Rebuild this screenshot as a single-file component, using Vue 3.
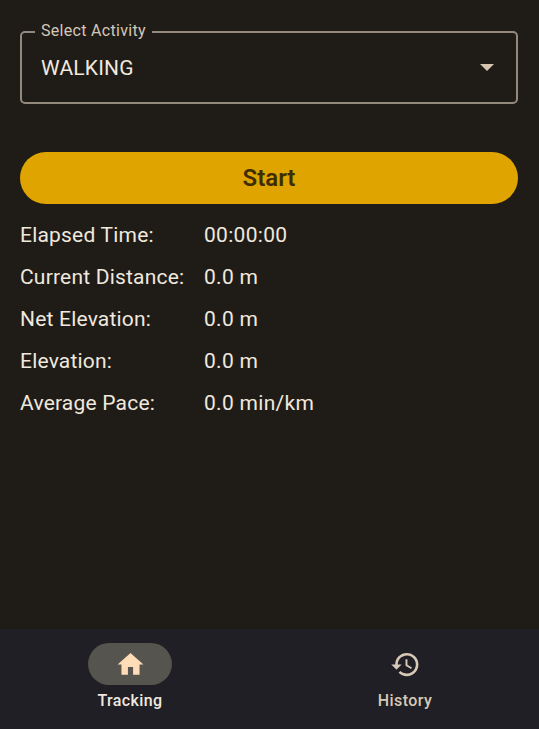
<script setup>
const stats = [
  { label: 'Elapsed Time:', value: '00:00:00' },
  { label: 'Current Distance:', value: '0.0 m' },
  { label: 'Net Elevation:', value: '0.0 m' },
  { label: 'Elevation:', value: '0.0 m' },
  { label: 'Average Pace:', value: '0.0 min/km' },
]
</script>

<template>
  <div class="screen">
    <main class="content">
      <div class="select">
        <span class="legend">Select Activity</span>
        <span class="select-value">WALKING</span>
        <svg class="caret" width="14" height="7" viewBox="0 0 14 7"><path d="M0 0h14L7 7z" fill="#d5c4ae" /></svg>
      </div>
      <button class="start">Start</button>
      <div class="stats">
        <div v-for="s in stats" :key="s.label" class="stat">
          <span class="stat-label">{{ s.label }}</span>
          <span class="stat-value">{{ s.value }}</span>
        </div>
      </div>
    </main>
    <nav class="nav">
      <div class="nav-item active">
        <div class="pill">
          <svg width="31" height="31" viewBox="0 0 24 24"><path d="M10 20v-6h4v6h5v-8h3L12 3 2 12h3v8z" fill="#ffdcb8" /></svg>
        </div>
        <span class="nav-label">Tracking</span>
      </div>
      <div class="nav-item">
        <div class="pill">
          <svg width="31" height="31" viewBox="0 0 24 24"><path d="M13 3a9 9 0 0 0-9 9H1l3.89 3.89.07.14L9 12H6a7 7 0 1 1 2.05 4.95l-1.42 1.42A8.96 8.96 0 0 0 13 21a9 9 0 0 0 0-18zm-1 5v5l4.28 2.54.72-1.21-3.5-2.08V8z" fill="#d8c8b6" /></svg>
        </div>
        <span class="nav-label muted">History</span>
      </div>
    </nav>
  </div>
</template>

<style>
html, body { margin: 0; background: #1f1c18; }
</style>

<style scoped>
.screen {
  width: 539px;
  height: 729px;
  display: flex;
  flex-direction: column;
  background: #1f1c18;
  font-family: Roboto, "Liberation Sans", sans-serif;
  color: #f0e8de;
  overflow: hidden;
}
.content {
  flex: 1;
  padding: 31px 21px 0 20px;
  display: flex;
  flex-direction: column;
}
.select {
  height: 73px;
  box-sizing: border-box;
  border: 2px solid #93897c;
  border-radius: 5px;
  padding: 0 20px 0 19px;
  display: flex;
  align-items: center;
  justify-content: space-between;
  position: relative;
}
.legend {
  position: absolute;
  left: 13px;
  top: -12px;
  padding: 0 6px;
  background: #1f1c18;
  font-size: 16px;
  line-height: 20px;
  letter-spacing: 0.3px;
  color: #d5c7b7;
}
.select-value {
  font-size: 21px;
  line-height: 28px;
  letter-spacing: 0.2px;
  color: #f0e8de;
}
.caret { margin-right: 2px; }
.start {
  margin-top: 48px;
  height: 52px;
  border: 0;
  border-radius: 26px;
  background: #e0a400;
  color: #3f2d00;
  font-family: inherit;
  font-size: 24px;
  font-weight: 600;
  padding: 0;
}
.stats {
  margin-top: 10px;
  display: flex;
  flex-direction: column;
}
.stat {
  height: 42px;
  display: flex;
  align-items: center;
  font-size: 21px;
  letter-spacing: 0.2px;
}
.stat-label { width: 184px; flex: none; }
.stat-value { letter-spacing: 0.3px; }
.nav {
  height: 100px;
  background: #1f1f25;
  display: flex;
  gap: 15px;
  padding: 14px 4px 0 0;
  box-sizing: border-box;
}
.nav-item {
  flex: 1;
  display: flex;
  flex-direction: column;
  align-items: center;
}
.pill {
  width: 84px;
  height: 42px;
  border-radius: 21px;
  display: flex;
  align-items: center;
  justify-content: center;
}
.active .pill { background: #55544e; }
.nav-label {
  margin-top: 6px;
  font-size: 16px;
  line-height: 20px;
  font-weight: 500;
  letter-spacing: 0.4px;
  color: #f0e8de;
}
.nav-label.muted { color: #d8c8b6; }
</style>
